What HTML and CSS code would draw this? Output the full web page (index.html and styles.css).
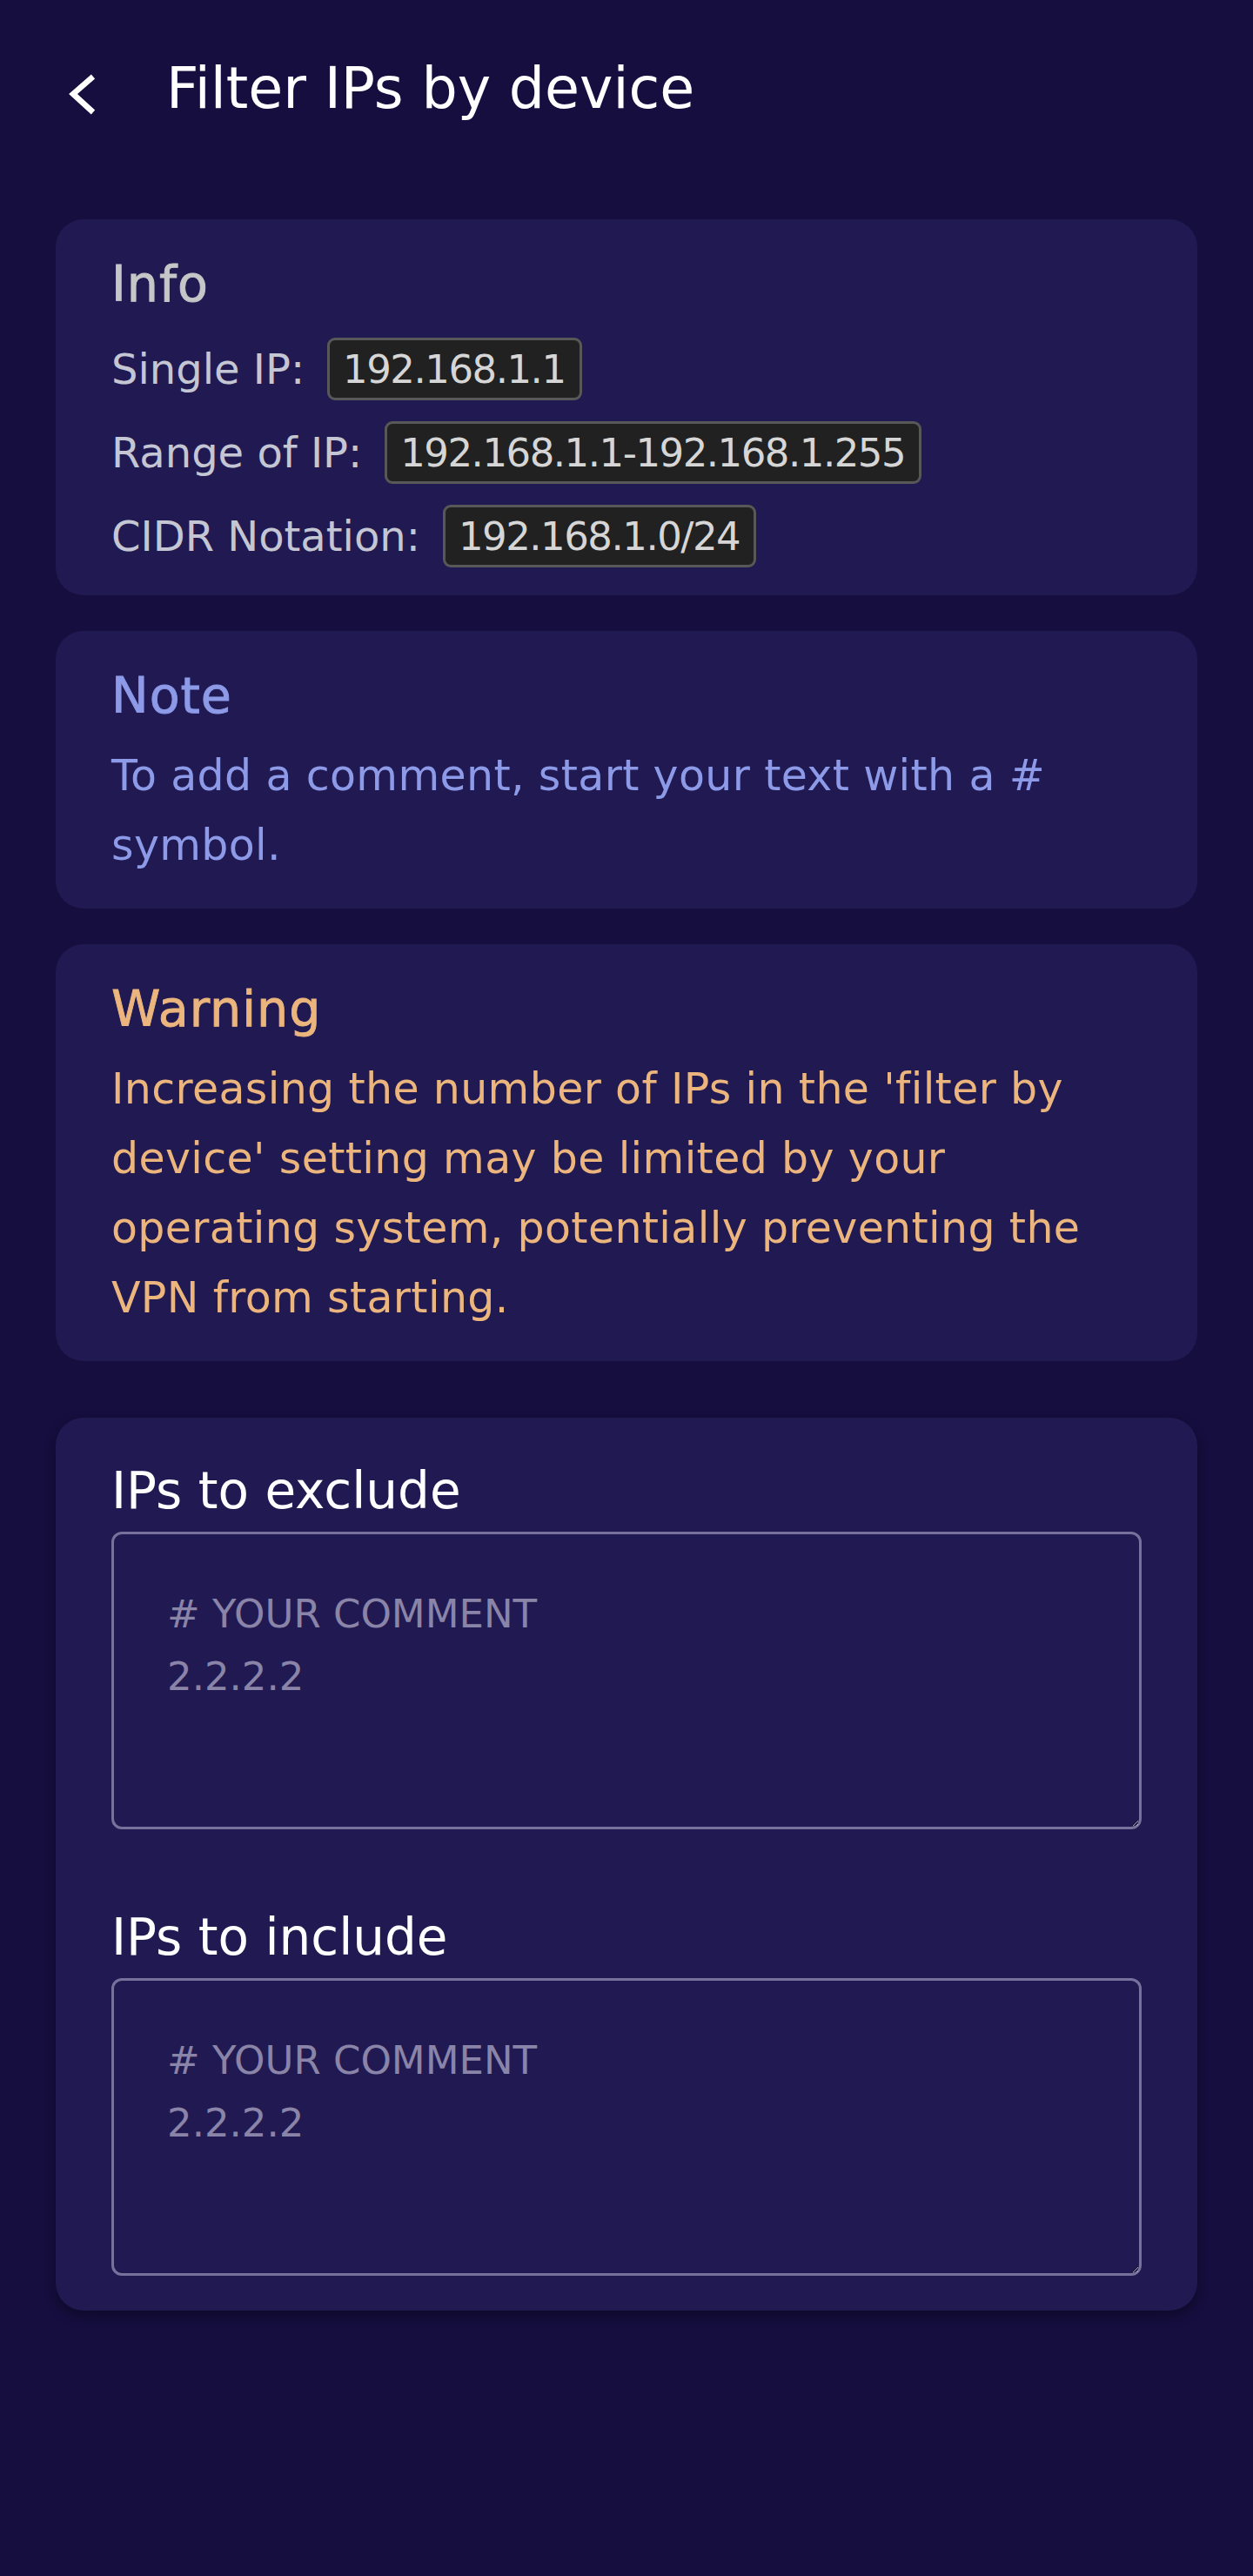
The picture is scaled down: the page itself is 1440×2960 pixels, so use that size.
FILE: index.html
```html
<!DOCTYPE html>
<html lang="en">
<head>
<meta charset="utf-8">
<title>Filter IPs by device</title>
<link rel="stylesheet" href="styles.css">
</head>
<body>
<header class="topbar">
  <button class="back" type="button" aria-label="Back">
    <svg width="36" height="52" viewBox="0 0 36 52" aria-hidden="true">
      <polyline points="29,6 6,26 29,47" fill="none" stroke="#ffffff" stroke-width="6.5" stroke-linecap="butt" stroke-linejoin="miter"/>
    </svg>
  </button>
  <h1 class="title">Filter IPs by device</h1>
</header>
<main class="content">
  <section class="card">
    <h2 class="card-title info-title">Info</h2>
    <div class="rows">
      <div class="row"><span class="label">Single IP:</span><code class="chip">192.168.1.1</code></div>
      <div class="row"><span class="label">Range of IP:</span><code class="chip">192.168.1.1-192.168.1.255</code></div>
      <div class="row"><span class="label">CIDR Notation:</span><code class="chip">192.168.1.0/24</code></div>
    </div>
  </section>
  <section class="card">
    <h2 class="card-title note-title">Note</h2>
    <p class="card-text note-text">To add a comment, start your text with a # symbol.</p>
  </section>
  <section class="card">
    <h2 class="card-title warn-title">Warning</h2>
    <p class="card-text warn-text">Increasing the number of IPs in the 'filter by device' setting may be limited by your operating system, potentially preventing the VPN from starting.</p>
  </section>
  <section class="card editor">
    <label class="field-label" for="exclude">IPs to exclude</label>
    <textarea class="field" id="exclude" placeholder="# YOUR COMMENT&#10;2.2.2.2"></textarea>
    <label class="field-label second" for="include">IPs to include</label>
    <textarea class="field" id="include" placeholder="# YOUR COMMENT&#10;2.2.2.2"></textarea>
  </section>
</main>
</body>
</html>
```
FILE: styles.css
```css
html, body {
  margin: 0;
  padding: 0;
}
body {
  background: #150e3f;
  font-family: "DejaVu Sans", "Noto Sans", sans-serif;
  min-height: 2960px;
  color: #ffffff;
}
.topbar {
  display: flex;
  align-items: flex-start;
  padding-top: 64px;
}
.back {
  margin: 18px 0 0 78px;
  padding: 0;
  width: 36px;
  height: 52px;
  border: 0;
  background: transparent;
  display: block;
}
.back svg {
  display: block;
}
.title {
  margin: 0 0 0 77px;
  font-size: 65px;
  line-height: 76px;
  font-weight: normal;
  color: #ffffff;
}
.content {
  display: flex;
  flex-direction: column;
  gap: 41px;
  padding: 112px 64px 0;
}
.card {
  background: #211a52;
  border-radius: 32px;
  padding: 40px 64px 32px;
}
.card-title {
  margin: 0;
  font-size: 57px;
  line-height: 68px;
  font-weight: normal;
  letter-spacing: 1px;
  -webkit-text-stroke: 0.9px currentColor;
}
.info-title { color: #c6c6c8; }
.note-title { color: #8d9ae8; }
.warn-title { color: #ebb57d; }
.rows {
  margin-top: 28px;
  display: flex;
  flex-direction: column;
  gap: 24px;
}
.row {
  display: flex;
  align-items: center;
  height: 72px;
  gap: 26px;
}
.label {
  font-size: 48px;
  color: #c4c6d4;
  white-space: nowrap;
}
.chip {
  box-sizing: border-box;
  height: 72px;
  display: flex;
  align-items: center;
  padding: 0 16px 0 15px;
  border: 3px solid #585858;
  border-radius: 9px;
  background: #212121;
  color: #d6d6d6;
  font-family: "DejaVu Sans", sans-serif;
  font-size: 45px;
  letter-spacing: -1.5px;
  white-space: nowrap;
}
.card-text {
  margin: 19px 0 0;
  font-size: 49px;
  line-height: 80px;
  letter-spacing: 0.35px;
}
.note-text { color: #8d9ae8; }
.warn-text { color: #ebb57d; }
.editor {
  margin-top: 24px;
  padding: 50px 64px 40px;
  box-shadow: 0 6px 14px rgba(0, 0, 0, 0.35);
}
.field-label {
  display: block;
  font-size: 58px;
  line-height: 68px;
  color: #ffffff;
}
.field-label.second {
  margin-top: 90px;
}
.field {
  display: block;
  box-sizing: border-box;
  width: 100%;
  height: 342px;
  margin: 13px 0 0;
  padding: 56px 61px;
  border: 3px solid #77719b;
  border-radius: 12px;
  background: transparent;
  color: #d8d6e6;
  font-family: "DejaVu Sans", sans-serif;
  font-size: 45px;
  line-height: 72px;
  outline: none;
}
.field::placeholder {
  color: #8a84a9;
  opacity: 1;
}
```
